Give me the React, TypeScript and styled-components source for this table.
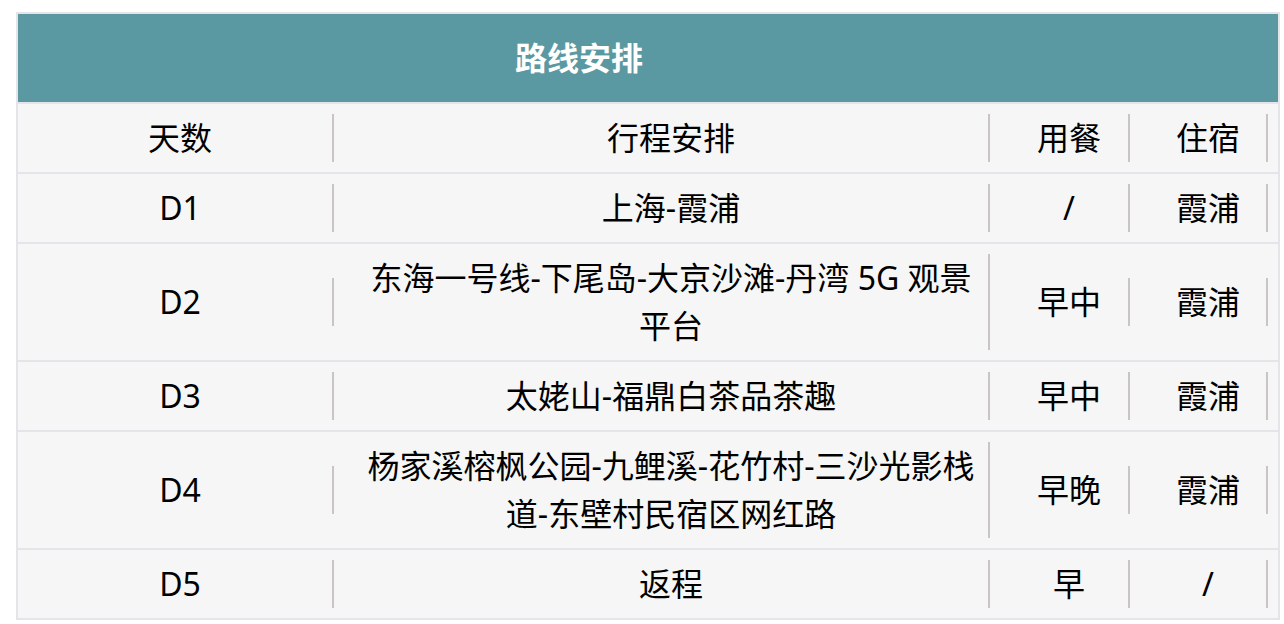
import React from "react";
import styled, { createGlobalStyle } from "styled-components";

const GlobalStyle = createGlobalStyle`
  html, body {
    margin: 0;
    padding: 0;
    background: #ffffff;
  }
  body {
    padding: 12px 4px 0 16px;
    font-family: "Noto Sans", "Noto Sans CJK SC", sans-serif;
    color: #000;
  }
`

const COLUMNS = "326px 656px 140px 138px"

const Table = styled.div`
  width: 1260px;
  display: flex;
  flex-direction: column;
  gap: 2px;
  padding: 2px;
  background: #e4e4e9;
`

const Row = styled.div`
  display: grid;
  grid-template-columns: ${COLUMNS};
  background: #f6f6f6;
`

const TitleRow = styled(Row)`
  background: #5a99a2;
  height: 88px;
  align-items: center;
`

const Title = styled.div<{ span: number }>`
  grid-column: span ${props => props.span};
  text-align: center;
  color: #fff;
  font-size: 32px;
  font-weight: 700;
  line-height: 48px;
  letter-spacing: 0;
`

const Cell = styled.div`
  padding: 10px;
  display: flex;
  align-items: center;
`

const CellInner = styled.div`
  flex: 1;
  border-right: 2px solid #c9c5c7;
  text-align: center;
  font-size: 32px;
  line-height: 48px;
`

const NoWrap = styled.span`
  white-space: nowrap;
`

type Day = {
  day: string
  route: React.ReactNode
  meals: string
  stay: string
}

const days: Day[] = [
  { day: "D1", route: "上海-霞浦", meals: "/", stay: "霞浦" },
  {
    day: "D2",
    route: <>东海一号线-下尾岛-大京沙滩-丹湾 5G 观景<NoWrap>平台</NoWrap></>,
    meals: "早中",
    stay: "霞浦"
  },
  { day: "D3", route: "太姥山-福鼎白茶品茶趣", meals: "早中", stay: "霞浦" },
  {
    day: "D4",
    route: "杨家溪榕枫公园-九鲤溪-花竹村-三沙光影栈道-东壁村民宿区网红路",
    meals: "早晚",
    stay: "霞浦"
  },
  { day: "D5", route: "返程", meals: "早", stay: "/" },
]

const headers = ["天数", "行程安排", "用餐", "住宿"]

export default function App() {
  return <>
    <GlobalStyle />
    <Table>
      <TitleRow>
        <Title span={3}>路线安排</Title>
        <div />
      </TitleRow>
      <Row>
        {headers.map(h => <Cell key={h}><CellInner>{h}</CellInner></Cell>)}
      </Row>
      {days.map(d => <Row key={d.day}>
        <Cell><CellInner>{d.day}</CellInner></Cell>
        <Cell><CellInner>{d.route}</CellInner></Cell>
        <Cell><CellInner>{d.meals}</CellInner></Cell>
        <Cell><CellInner>{d.stay}</CellInner></Cell>
      </Row>)}
    </Table>
  </>
}
